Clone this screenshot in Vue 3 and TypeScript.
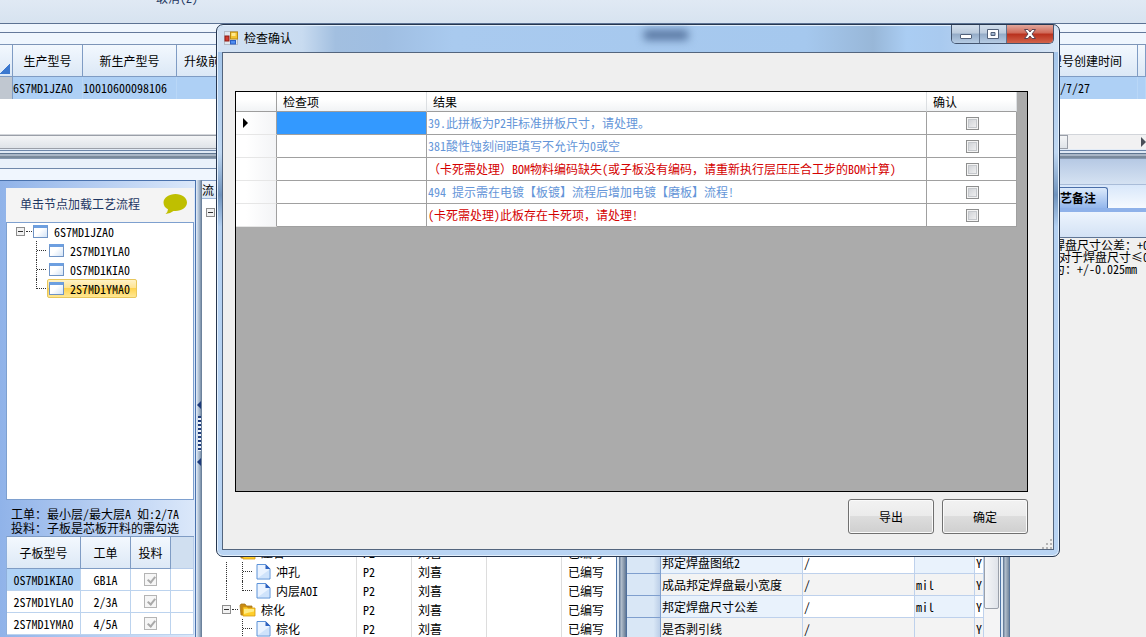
<script setup lang="ts">
import { ref } from 'vue'

interface CheckRow {
  text: string
  level: 'info' | 'error'
  confirmed: boolean
}

const checks = ref<CheckRow[]>([
  { text: '39.此拼板为P2非标准拼板尺寸，请处理。', level: 'info', confirmed: false },
  { text: '381酸性蚀刻间距填写不允许为0或空', level: 'info', confirmed: false },
  { text: '（卡死需处理）BOM物料编码缺失(或子板没有编码，请重新执行层压压合工步的BOM计算)', level: 'error', confirmed: false },
  { text: '494 提示需在电镀【板镀】流程后增加电镀【磨板】流程!', level: 'info', confirmed: false },
  { text: '(卡死需处理)此板存在卡死项，请处理!', level: 'error', confirmed: false },
])

// Full-width punctuation keeps its full-width form; the rest uses half-width Latin.
const runs = (text: string): string[] => text.split(/([，（）。]+)/).filter(Boolean)
const isWide = (run: string): boolean => /^[，（）。]/.test(run)

const children = ['2S7MD1YLA0', '0S7MD1KIA0', '2S7MD1YMA0']
const selectedChild = ref('2S7MD1YMA0')

const orders = [
  { model: '0S7MD1KIA0', order: 'GB1A' },
  { model: '2S7MD1YLA0', order: '2/3A' },
  { model: '2S7MD1YMA0', order: '4/5A' },
]

const steps = [
  { name: '压合', kind: 'folder' },
  { name: '冲孔', kind: 'file' },
  { name: '内层AOI', kind: 'file', last: true },
  { name: '棕化', kind: 'folder' },
  { name: '棕化', kind: 'file' },
]

const props = [
  { name: '邦定焊盘图纸2', unit: '' },
  { name: '成品邦定焊盘最小宽度', unit: 'mil' },
  { name: '邦定焊盘尺寸公差', unit: 'mil' },
  { name: '是否剥引线', unit: '' },
]
</script>

<template>
  <div class="app" lang="zh-CN">
    <header class="toolbar"><button type="button" class="cancel">取消(Z)</button></header>
    <div class="band band-a"></div>
    <div class="band band-b"></div>

    <section class="orders">
      <table class="order-table">
        <colgroup>
          <col class="w-sel" /><col class="w-model" /><col class="w-new" /><col /><col class="w-time" /><col class="w-end" />
        </colgroup>
        <thead>
          <tr>
            <th class="corner"><i></i></th>
            <th>生产型号</th>
            <th>新生产型号</th>
            <th class="left">升级前</th>
            <th class="right">型号创建时间</th>
            <th></th>
          </tr>
        </thead>
        <tbody>
          <tr>
            <td class="rowhead"></td>
            <td>6S7MD1JZA0</td>
            <td>10010600098106</td>
            <td></td>
            <td class="time">/7/27</td>
            <td></td>
          </tr>
        </tbody>
      </table>
      <div class="hscroll"><span class="hthumb"></span><i class="harrow"></i></div>
      <div class="split-h"></div>
    </section>

    <main class="work">
      <div class="work-left">
        <div class="band-c"></div>
        <div class="band-d"></div>
        <div class="panes">
          <aside class="side">
            <div class="side-head">
              <span>单击节点加载工艺流程</span>
              <svg width="25" height="22" viewBox="0 0 25 22"><path d="M12.500 1C19 1 24 4.800 24 9.500S19 18 12.500 18L10.500 18Q7.500 20.500 2.500 21Q5 18.500 5 16.200C2 14.700 .5 12.500 .5 9.500C.5 4.800 6 1 12.500 1Z" fill="#bfbf00" /></svg>
            </div>
            <div class="tree">
              <div class="node root">
                <i class="expander"></i><i class="dash"></i><i class="win"></i><span>6S7MD1JZA0</span>
              </div>
              <div v-for="(c, i) in children" :key="c" class="node child" :class="{ end: i === children.length - 1 }">
                <i class="elbow"></i>
                <button type="button" class="label" :class="{ active: c === selectedChild }" @click="selectedChild = c">
                  <i class="win"></i><span>{{ c }}</span>
                </button>
              </div>
            </div>
            <p class="note">工单：最小层/最大层A 如:2/7A<br />投料：子板是芯板开料的需勾选</p>
            <table class="sub-table">
              <colgroup><col class="s1" /><col class="s2" /><col class="s3" /><col /></colgroup>
              <thead><tr><th>子板型号</th><th>工单</th><th>投料</th><th class="blank"></th></tr></thead>
              <tbody>
                <tr v-for="(o, i) in orders" :key="o.model">
                  <td :class="{ picked: i === 0 }">{{ o.model }}</td>
                  <td>{{ o.order }}</td>
                  <td><input type="checkbox" class="ticked" checked disabled :aria-label="'投料 ' + o.model" /></td>
                  <td></td>
                </tr>
              </tbody>
            </table>
          </aside>
          <div class="splitter narrow">
            <i class="tri"></i><i class="dots"></i><i class="tri"></i>
          </div>
          <section class="flow">
            <div class="flow-head">流</div>
            <div class="flow-body">
              <div class="flow-top"><i class="expander"></i></div>
              <div v-for="(s, i) in steps" :key="i" class="step">
                <div class="step-name" :class="[s.kind, { last: s.last, tail: i > 3 }]">
                  <template v-if="s.kind === 'folder'">
                    <i class="expander"></i><i class="dash"></i>
                    <svg width="17" height="16" viewBox="0 0 17 16">
                      <path d="M1 3.500L2 2H6L7.500 4H13V13H2Z" fill="#c98a12" stroke="#a8791c" stroke-width=".8" />
                      <path d="M4 5H8L9 6H16V14H4Z" fill="#ffce2b" stroke="#d49a12" stroke-width=".8" />
                      <path d="M5 7H15V9.500Q10 10 5 12Z" fill="#ffec85" />
                    </svg>
                  </template>
                  <template v-else>
                    <i class="elbow"></i>
                    <svg width="15" height="17" viewBox="0 0 15 17">
                      <path d="M1 1.500H9.500L14 6V16H1Z" fill="#eaf3ff" stroke="#5b92d8" />
                      <path d="M2 15L13 7V15Z" fill="#cfe3fb" />
                      <path d="M9.500 1L14.500 6H9.500Z" fill="#2f63c0" />
                    </svg>
                  </template>
                  <span>{{ s.name }}</span>
                </div>
                <span>P2</span><span>刘喜</span><span></span><span>已编写</span>
              </div>
            </div>
          </section>
          <div class="splitter mid"></div>
          <section class="grid">
            <table class="prop-table">
              <colgroup><col class="p0" /><col class="p1" /><col /><col class="p3" /><col class="p4" /></colgroup>
              <tbody>
                <tr v-for="p in props" :key="p.name">
                  <td class="ph"></td>
                  <td class="pn">{{ p.name }}</td>
                  <td>/</td>
                  <td class="pu">{{ p.unit }}</td>
                  <td>Y</td>
                </tr>
              </tbody>
            </table>
            <div class="vscroll"><span></span></div>
          </section>
          <div class="splitter"></div>
        </div>
      </div>
      <section class="remarks">
        <div class="r-band"></div>
        <div class="tabs"><button type="button" class="tab">艺备注</button></div>
        <div class="r-tool"></div>
        <div class="r-text">焊盘尺寸公差：+0<br />&nbsp;对于焊盘尺寸≤0<br />为：+/-0.025mm</div>
      </section>
    </main>

    <div class="dialog" role="dialog" aria-labelledby="dlg-title">
      <div class="titlebar">
        <svg class="app-icon" width="14" height="14" viewBox="0 0 14 14">
          <rect x=".5" y=".5" width="13" height="13" fill="#dfe6ee" stroke="#b5bcc6" />
          <rect x="6.500" y="1" width="7" height="7" fill="#f4c430" stroke="#b98a14" />
          <rect x="7.500" y="2" width="4" height="3" fill="#ffe98c" />
          <rect x="1" y="5" width="4" height="5" fill="#d33b2c" stroke="#8e1d16" />
          <rect x="6.500" y="9.500" width="5" height="3.500" fill="#4f8df0" stroke="#2a5fc4" />
        </svg>
        <h1 id="dlg-title">检查确认</h1>
        <i class="ghost"></i>
        <div class="win-btns">
          <button type="button" aria-label="最小化"><svg width="14" height="14" viewBox="0 0 14 14"><rect x="1.500" y="7.500" width="11" height="4" rx=".5" fill="#fff" stroke="#52617a" /></svg></button>
          <button type="button" aria-label="最大化"><svg width="14" height="14" viewBox="0 0 14 14"><path d="M1.500 2.500H12.500V11.500H1.500ZM5 5.500V8.500H9V5.500Z" fill="#fff" fill-rule="evenodd" stroke="#52617a" /></svg></button>
          <button type="button" class="close" aria-label="关闭"><svg width="14" height="12" viewBox="0 0 14 12"><path d="M1.500 1.500H5L7 4L9 1.500H12.500L9 6L12.500 10.500H9L7 8L5 10.500H1.500L5 6Z" fill="#fff" stroke="#5e4350" /></svg></button>
        </div>
      </div>
      <div class="client">
        <div class="check-area">
          <table class="check-table">
            <colgroup><col class="c0" /><col class="c1" /><col /><col class="c3" /></colgroup>
            <thead><tr><th></th><th>检查项</th><th>结果</th><th>确认</th></tr></thead>
            <tbody>
              <tr v-for="(c, i) in checks" :key="i">
                <td class="head"><i v-if="i === 0" class="cursor"></i></td>
                <td :class="{ current: i === 0 }"></td>
                <td :class="c.level"><span v-for="(r, k) in runs(c.text)" :key="k" :class="{ wide: isWide(r) }">{{ r }}</span></td>
                <td class="cb"><input v-model="c.confirmed" type="checkbox" :aria-label="'确认 ' + c.text" /></td>
              </tr>
            </tbody>
          </table>
        </div>
        <div class="actions">
          <button type="button">导出</button>
          <button type="button">确定</button>
        </div>
        <svg class="grip" width="10" height="10" viewBox="0 0 10 10" fill="#b4b4b4"><path d="M8 0h2v2h-2zM4 4h2v2h-2zM8 4h2v2h-2zM0 8h2v2h-2zM4 8h2v2h-2zM8 8h2v2h-2z" /></svg>
      </div>
    </div>
  </div>
</template>

<style>
html,
body {
  margin: 0;
  background: #f0f0f0;
}
</style>

<style scoped>
* {
  box-sizing: border-box;
}
.app {
  position: relative;
  display: flex;
  flex-direction: column;
  height: 100vh;
  overflow: hidden;
  background: #f0f5fc;
  color: #000;
  font-family: "Noto Sans CJK SC", "Liberation Sans", sans-serif;
  font-size: 12px;
  line-height: 18px;
  font-feature-settings: "hwid";
  text-spacing-trim: space-all;
}
.wide {
  font-feature-settings: normal;
}
button,
input {
  font: inherit;
  font-feature-settings: inherit;
  color: inherit;
  margin: 0;
  padding: 0;
  border: 0;
  background: none;
}
i {
  display: block;
  flex: none;
}
svg {
  display: block;
  flex: none;
}
table {
  border-collapse: separate;
  border-spacing: 0;
  table-layout: fixed;
  width: 100%;
}
th,
td {
  font-weight: 400;
  padding: 0;
  overflow: hidden;
  white-space: nowrap;
}

/* top bars */
.toolbar {
  flex: none;
  display: flex;
  align-items: flex-end;
  height: 24px;
  padding-left: 156px;
  background: linear-gradient(#e0e9f4, #d7e3f0);
  border-bottom: 1px solid #5c7293;
}
.cancel {
  height: 18px;
  line-height: 18px;
  margin-bottom: 16px;
  color: #1e3560;
}
.band {
  flex: none;
  background: #eff6fe;
}
.band-a {
  height: 9px;
  border-bottom: 1px solid #64799b;
}
.band-b {
  height: 12px;
  border-bottom: 1px solid #7d95b8;
}
.orders {
  flex: none;
  background: #fff;
}
.order-table {
  margin-bottom: 35px;
}
.w-sel { width: 13px; }
.w-model { width: 70px; }
.w-new { width: 94px; }
.w-time { width: 98px; }
.w-end { width: 8px; }
.order-table th {
  height: 32px;
  border-right: 1px solid #7f9cc4;
  border-bottom: 1px solid #7f9cc4;
  background: linear-gradient(#f3f8fe, #dbe8f6);
  vertical-align: middle;
}
.order-table th.left {
  text-align: left;
  padding-left: 7px;
}
.order-table th.right {
  text-align: right;
  padding-right: 15px;
}
.order-table th.corner {
  vertical-align: bottom;
}
.corner i {
  width: 10px;
  height: 10px;
  margin-bottom: 2px;
  background: linear-gradient(135deg, transparent 50%, #3b78cf 50%);
}
.order-table td {
  height: 22px;
  background: #aed0f5;
  border-right: 1px solid #b9d7f7;
}
.order-table td.rowhead {
  background: #c0c7d0;
  border-right-color: #7f9cc4;
}
.order-table td.time {
  padding-left: 20px;
}
.hscroll {
  display: flex;
  align-items: center;
  height: 15px;
  border-top: 1px solid #d2d5da;
  background: #f1f1f2;
}
.hthumb {
  flex: 1;
  height: 14px;
  margin-right: 73px;
  border: 1px solid #9a9fa8;
  border-left: 0;
  background: linear-gradient(#f4f5f7, #dfe3e8);
}
.harrow {
  border-left: 5px solid #4a4f58;
  border-top: 5px solid transparent;
  border-bottom: 5px solid transparent;
}
.split-h {
  height: 10px;
  background: linear-gradient(#e2ebf6 0 1px, #6e87aa 1px 2px, #dfe9f5 2px 4px, #5e7590 4px 5px, #a9b6c6 5px 7px, #7a8a9c 7px 9px, #8598b0 9px);
}

/* work area */
.work {
  flex: 1;
  display: flex;
  min-height: 0;
}
.work-left {
  flex: none;
  display: flex;
  flex-direction: column;
}
.band-c {
  flex: none;
  height: 10px;
  background: #e9f1fb;
  border-bottom: 1px solid #7088ab;
}
.band-d {
  flex: none;
  height: 11px;
  background: #f0f6fe;
}
.panes {
  flex: 1;
  display: flex;
  min-height: 0;
}
.side {
  flex: none;
  width: 196px;
  padding: 7px 1px 0 6px;
  border-top: 1px solid #4a72ad;
  border-right: 1px solid #4a72ad;
  background: linear-gradient(90deg, #90b3e9, #dbe8fa);
}
.side-head {
  display: flex;
  align-items: center;
  justify-content: space-between;
  height: 34px;
  padding: 0 6px 2px 14px;
  background: #f4f4f4;
  color: #1f3762;
}
.tree {
  height: 278px;
  padding-left: 9px;
  border: 1px solid #7ea0cf;
  border-top-width: 0;
  box-shadow: inset 0 1px 0 #7ea0cf;
  background: #fff;
}
.node {
  display: flex;
  align-items: center;
  height: 19px;
}
.expander {
  width: 9px;
  height: 9px;
  border: 1px solid #8d8d8d;
  background: linear-gradient(#333, #333) center / 5px 1px no-repeat, #f2f2f2;
}
.dash {
  width: 6px;
  margin-left: 1px;
  border-top: 1px dotted #333;
}
.win {
  width: 15px;
  height: 13px;
  border: 1px solid #6f93c4;
  border-top: 3px solid #6d9fe0;
  background: linear-gradient(135deg, #fff 40%, #d3e3f6);
}
.root .win {
  margin: 0 6px 0 1px;
}
.child {
  padding-left: 20px;
}
.elbow {
  width: 10px;
  height: 19px;
  border-left: 1px dotted #333;
  background: repeating-linear-gradient(90deg, #333 0 1px, transparent 1px 2px) 0 9px / 100% 1px no-repeat;
}
.end .elbow,
.last .elbow {
  height: 10px;
  margin-bottom: 9px;
}
.label {
  display: flex;
  align-items: center;
  gap: 6px;
  height: 19px;
  padding: 0 6px 0 1px;
  margin-left: 1px;
  border: 1px solid transparent;
  border-radius: 2px;
}
.label.active {
  border-color: #e8c75c;
  background: linear-gradient(#fff2c6, #ffe493 45%, #ffd34f 50%, #ffe793);
}
.note {
  margin: 0;
  height: 36px;
  padding: 7px 0 0 5px;
  line-height: 14px;
  white-space: nowrap;
}
.sub-table {
  border-left: 1px solid #8fb0dc;
  border-top: 1px solid #7f9cc4;
  background: #fff;
}
.s1 { width: 74px; }
.s2 { width: 50px; }
.s3 { width: 40px; }
.sub-table th {
  height: 32px;
  border-right: 1px solid #7f9cc4;
  border-bottom: 1px solid #7f9cc4;
  background: linear-gradient(#f3f8fe, #dde9f6);
}
.sub-table th.blank {
  background: #d0dff0;
  border-color: #b8cdea;
}
.sub-table td {
  height: 22px;
  border-right: 1px solid #bcd3ee;
  border-bottom: 1px solid #bcd3ee;
  text-align: center;
}
.sub-table td.picked {
  background: #afd2f6;
}
.ticked {
  appearance: none;
  display: block;
  width: 13px;
  height: 13px;
  margin: 0 auto;
  border: 1px solid #b4b4b4;
  background: #f6f6f6;
}
.ticked::after {
  content: "";
  display: block;
  width: 3px;
  height: 6px;
  margin: 1px 0 0 4px;
  box-sizing: content-box;
  border-right: 2px solid #aaa;
  border-bottom: 2px solid #aaa;
  transform: rotate(40deg);
}
.splitter {
  flex: none;
  width: 10px;
  background: linear-gradient(90deg, #4f76a8 0 1px, #dfeaf6 1px 3px, #6a7f9a 3px 4px, #b7c3d0 5px, #76889e 9px, #44689a);
}
.splitter.mid {
  width: 11px;
}
.narrow {
  display: flex;
  flex-direction: column;
  align-items: center;
  gap: 7px;
  width: 6px;
  padding-top: 221px;
  background: linear-gradient(90deg, #e6effa, #9db0c6 60%, #5f7590);
}
.tri {
  border-right: 4px solid #1d3a7a;
  border-top: 4px solid transparent;
  border-bottom: 4px solid transparent;
}
.dots {
  width: 3px;
  height: 35px;
  background: repeating-linear-gradient(#1d3a7a 0 2px, #eef4fb 2px 4px);
}

/* process flow */
.flow {
  flex: none;
  width: 414px;
  overflow: hidden;
  background: linear-gradient(#ddd, #ddd) 154px 0 / 1px 100% no-repeat, linear-gradient(#ddd, #ddd) 209px 0 / 1px 100% no-repeat,
    linear-gradient(#ddd, #ddd) 284px 0 / 1px 100% no-repeat, linear-gradient(#ddd, #ddd) 359px 0 / 1px 100% no-repeat, #fff;
}
.flow-head {
  height: 19px;
  border-top: 1px solid #7f9cc4;
  border-bottom: 1px solid #9db6d8;
  background: linear-gradient(#eff5fd, #dbe8f6);
}
.flow-top {
  height: 344px;
  padding: 9px 0 0 4px;
}
.step {
  display: grid;
  grid-template-columns: 154px 55px 75px 75px 1fr;
  height: 19px;
  line-height: 19px;
}
.step > span {
  padding-left: 7px;
}
.step-name {
  display: flex;
  align-items: center;
  padding-left: 20px;
}
.step-name.file {
  padding-left: 40px;
  background: repeating-linear-gradient(#333 0 1px, transparent 1px 2px) 24px 0 / 1px 100% no-repeat;
}
.step-name.file.tail {
  background: none;
}
.step-name svg {
  margin: 0 5px 0 4px;
}
.folder svg {
  margin: 0 5px 0 1px;
}

/* property grid */
.grid {
  flex: none;
  display: flex;
  width: 373px;
  background: #fff;
}
.prop-table {
  align-self: flex-start;
  flex: 1;
  width: 0;
  margin-top: 372px;
}
.p0 { width: 34px; }
.p1 { width: 142px; }
.p3 { width: 60px; }
.p4 { width: 9px; }
.prop-table td {
  height: 22px;
  border-bottom: 1px solid #bed1ec;
  border-right: 1px solid #bed1ec;
  padding-left: 1px;
}
.prop-table tr:nth-child(even) td {
  background: #f3f3f3;
}
.prop-table td.pn,
.prop-table tr td.pu {
  background: #e9f2fc;
}
.prop-table tr:nth-child(even) td.pn,
.prop-table tr:nth-child(even) td.pu {
  background: #f3f3f3;
}
.prop-table tr td.ph {
  border-color: #7f9fce;
  background: linear-gradient(90deg, #d9e7f6 80%, #bccfe8);
}
.vscroll {
  flex: none;
  width: 16px;
  background: #f4f4f5;
}
.vscroll span {
  display: block;
  width: 15px;
  height: 429px;
  border: 1px solid #9aa0aa;
  border-radius: 2px;
  background: linear-gradient(90deg, #f5f6f8, #dfe3ea);
}

/* remarks */
.remarks {
  flex: 1;
  min-width: 0;
  overflow: hidden;
  background: #f0f0f0;
}
.r-band {
  height: 26px;
  border-bottom: 1px solid #a9bcd8;
  background: linear-gradient(#b6c9e4, #d5e2f2);
}
.tabs {
  display: flex;
  align-items: flex-end;
  height: 27px;
  border-bottom: 4px solid #8eb1e9;
  background: linear-gradient(#d8e7fa, #f6faff);
}
.tab {
  width: 98px;
  height: 21px;
  padding-right: 11px;
  border: 1px solid #4a6ea8;
  border-bottom: 0;
  border-radius: 0 3px 0 0;
  background: linear-gradient(#dceafb, #93b6ec);
  font-weight: 700;
  text-align: right;
}
.r-tool {
  height: 26px;
  border-bottom: 1px solid #5f7594;
  background: linear-gradient(#edf4fd, #d3e2f5);
}
.r-text {
  padding: 1px 0 0 43px;
  line-height: 12px;
  white-space: nowrap;
}

/* dialog */
.dialog {
  position: absolute;
  top: 24px;
  left: 216px;
  right: 86px;
  padding: 0 5px 6px;
  border: 1px solid #26364f;
  border-radius: 7px;
  background: linear-gradient(#b9d2ee 0%, #a5c6ea 5%, #c0d8f2 24%, #6f93bd 32%, #b4d1f2 38%, #b9d4f3 100%);
  box-shadow: inset 0 0 0 1px #e3f0fd;
}
.titlebar {
  display: flex;
  align-items: center;
  height: 26px;
  margin: 1px -4px 0;
  padding: 0 0 3px 6px;
  border-radius: 6px 6px 0 0;
  background: linear-gradient(90deg, #d3e2f3, #c8dbf0 10%, #a2bfe0 14%, #9fbee2 20%, #a9caef 28%, #a5c8ee 70%, #98b7d8 78%, #aacdf3 82%, #a9caef 86%, #d6e4f4);
}
h1 {
  margin: 0 0 0 6px;
  font-size: 12px;
  font-weight: 400;
}
.ghost {
  width: 44px;
  height: 10px;
  margin: 0 auto 6px 352px;
  background: #56749f;
  filter: blur(4px);
}
.win-btns {
  display: flex;
  align-self: flex-start;
  height: 19px;
  margin: -1px 4px 0 0;
  border: 1px solid #44556f;
  border-top: 0;
  border-radius: 0 0 5px 5px;
  overflow: hidden;
}
.win-btns button {
  display: flex;
  align-items: center;
  justify-content: center;
  width: 27px;
  border-right: 1px solid #5e718d;
  background: linear-gradient(#d3dfed, #bccbdd 45%, #94abc7 50%, #b6cce4);
}
.win-btns button:first-child {
  width: 28px;
}
.win-btns button.close {
  width: 46px;
  border-right: 0;
  background: linear-gradient(#e2a79c, #cf6857 45%, #b8301d 50%, #d2634b);
}
.client {
  display: flow-root;
  position: relative;
  padding: 38px 25px 15px 12px;
  border: 1px solid #53657e;
  background: #efefef;
}
.check-area {
  height: 401px;
  border: 1px solid #000;
  background: #ababab;
  padding-right: 10px;
}
.c0 { width: 41px; }
.c1 { width: 150px; }
.c3 { width: 90px; }
.check-table th {
  height: 20px;
  padding-left: 6px;
  text-align: left;
  border-right: 1px solid #dcdfe2;
  border-bottom: 1px solid #9d9d9d;
  background: linear-gradient(#fff 40%, #f1f3f5);
}
.check-table th:first-child {
  border-right-color: #a0a0a0;
}
.check-table td {
  height: 23px;
  padding-left: 1px;
  border-right: 1px solid #a0a0a0;
  border-bottom: 1px solid #a0a0a0;
  background: #fff;
}
.check-table td.head {
  border-bottom-color: #e6e6e6;
  background: linear-gradient(90deg, #fff 25%, #f3f4f6);
}
.check-table td.current {
  background: #3399ff;
}
.check-table td.info {
  color: #6495d8;
}
.check-table td.error {
  color: #d40000;
}
.cursor {
  margin-left: 6px;
  width: 0;
  border-left: 5px solid #000;
  border-top: 5px solid transparent;
  border-bottom: 5px solid transparent;
}
.cb input {
  appearance: none;
  display: block;
  width: 13px;
  height: 13px;
  margin: 0 auto;
  border: 1px solid #8e8f8f;
  background: linear-gradient(135deg, #c9ccd1, #f6f6f6);
  box-shadow: inset 0 0 0 1px #f4f4f4, inset 0 0 0 2px #c5c8cc;
}
.cb input:checked {
  background: #3b6ea5;
}
.actions {
  display: flex;
  justify-content: flex-end;
  gap: 8px;
  margin-top: 7px;
}
.actions button {
  width: 86px;
  height: 35px;
  border: 1px solid #707070;
  border-radius: 3px;
  background: linear-gradient(#f2f2f2, #ebebeb 49%, #dddddd 50%, #cfcfcf);
  box-shadow: inset 0 0 0 1px #fafafa;
}
.grip {
  position: absolute;
  right: 1px;
  bottom: 0;
}
</style>
